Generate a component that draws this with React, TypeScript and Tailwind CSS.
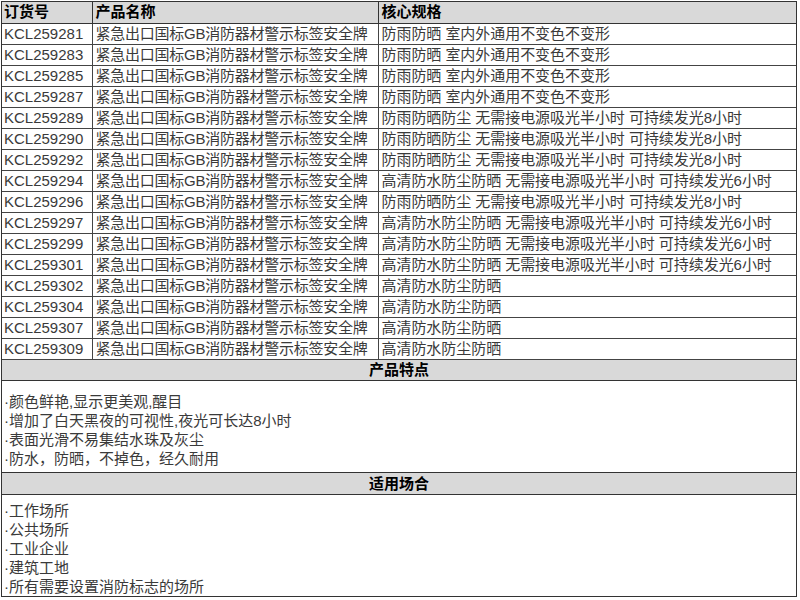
import React from 'react'

const NAME = '紧急出口国标GB消防器材警示标签安全牌'
const SPEC_A = '防雨防晒 室内外通用不变色不变形'
const SPEC_B = '防雨防晒防尘 无需接电源吸光半小时 可持续发光8小时'
const SPEC_C = '高清防水防尘防晒 无需接电源吸光半小时 可持续发光6小时'
const SPEC_D = '高清防水防尘防晒'

const rows: [string, string][] = [
  ['KCL259281', SPEC_A],
  ['KCL259283', SPEC_A],
  ['KCL259285', SPEC_A],
  ['KCL259287', SPEC_A],
  ['KCL259289', SPEC_B],
  ['KCL259290', SPEC_B],
  ['KCL259292', SPEC_B],
  ['KCL259294', SPEC_C],
  ['KCL259296', SPEC_B],
  ['KCL259297', SPEC_C],
  ['KCL259299', SPEC_C],
  ['KCL259301', SPEC_C],
  ['KCL259302', SPEC_D],
  ['KCL259304', SPEC_D],
  ['KCL259307', SPEC_D],
  ['KCL259309', SPEC_D],
]

const features = [
  '颜色鲜艳,显示更美观,醒目',
  '增加了白天黑夜的可视性,夜光可长达8小时',
  '表面光滑不易集结水珠及灰尘',
  '防水，防晒，不掉色，经久耐用',
]

const places = ['工作场所', '公共场所', '工业企业', '建筑工地', '所有需要设置消防标志的场所']

export default function App() {
  return (
    <div
      className="w-[800px] h-[600px] bg-white pt-[1px] pl-[1px] text-[15px] text-[#3a3a3a]"
      style={{ fontFamily: '"Liberation Sans", "Noto Sans CJK SC", sans-serif' }}
    >
      <div className="w-[796px] border border-[#333]">
        {/* Spec table */}
        <table className="w-full border-collapse table-fixed">
          <colgroup>
            <col className="w-[90px]" />
            <col className="w-[286px]" />
            <col />
          </colgroup>
          <thead>
            <tr className="h-[21px] bg-[#d9d9d9] text-black">
              <th className="border-r border-b border-[#333] px-[2px] text-left font-bold leading-[20px]">订货号</th>
              <th className="border-r border-b border-[#333] px-[3px] text-left font-bold leading-[20px]">产品名称</th>
              <th className="border-b border-[#333] px-[3px] text-left font-bold leading-[20px]">核心规格</th>
            </tr>
          </thead>
          <tbody>
            {rows.map(([id, spec]) => (
              <tr key={id} className="h-[21px]">
                <td className="border-r border-b border-[#444] px-[2px] leading-[20px] whitespace-nowrap">{id}</td>
                <td className="border-r border-b border-[#444] px-[3px] leading-[20px] whitespace-nowrap tracking-[-0.25px]">{NAME}</td>
                <td className="border-b border-[#444] px-[3px] leading-[20px] whitespace-nowrap tracking-[-0.05px]">{spec}</td>
              </tr>
            ))}
          </tbody>
        </table>

        {/* 产品特点 */}
        <div className="h-[21px] bg-[#d9d9d9] border-b border-[#333] text-center font-bold text-black leading-[20px]">
          产品特点
        </div>
        <div className="h-[92px] pt-[11px] border-b border-[#333] leading-[19px]">
          {features.map((f) => (
            <div key={f} className="pl-[2px]">·{f}</div>
          ))}
        </div>

        {/* 适用场合 */}
        <div className="h-[22px] bg-[#d9d9d9] border-b border-[#333] text-center font-bold text-black leading-[21px]">
          适用场合
        </div>
        <div className="h-[101px] pt-[6px] leading-[19px]">
          {places.map((p) => (
            <div key={p} className="pl-[2px]">·{p}</div>
          ))}
        </div>
      </div>
    </div>
  )
}
